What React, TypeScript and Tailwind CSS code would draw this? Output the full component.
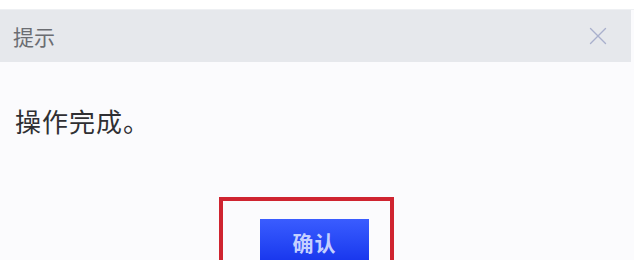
import { X } from "lucide-react";

export default function App(): JSX.Element {
  return (
    <div
      className="w-[634px] h-[260px] overflow-hidden bg-[#fbfbfd] flex flex-col"
      style={{ fontFamily: '"Noto Sans CJK SC", "Noto Sans", sans-serif' }}
    >
      <div className="h-[10px] bg-white border-b border-[#eef0f3]" />
      <div className="flex items-center h-[52px] w-[631px] bg-[#e6e8ec] pl-[13px] pr-[18px]">
        <p className="text-[21px] text-[#6b6d72] flex-grow leading-none">提示</p>
        <X className="w-[30px] h-[30px] text-[#a9b0cc]" strokeWidth={1.1} />
      </div>
      <div className="pt-[46px] pl-[15px]">
        <p className="text-[26px] text-[#2f2f33] leading-none tracking-[1px]">操作完成。</p>
      </div>
      <div className="flex-grow" />
      <div className="flex justify-center pr-[21px]">
        <div className="w-[175px] h-[63px] border-[4px] border-b-0 border-[#cf2430] flex pl-[37px] pt-[18px]">
          <div className="w-[109px] h-[60px] bg-gradient-to-b from-[#3a5cff] to-[#0d1fe6] flex justify-center pt-[13px]">
            <span className="text-[21px] font-semibold text-[#c5d0ff] leading-none tracking-[1px]">确认</span>
          </div>
        </div>
      </div>
    </div>
  );
}
